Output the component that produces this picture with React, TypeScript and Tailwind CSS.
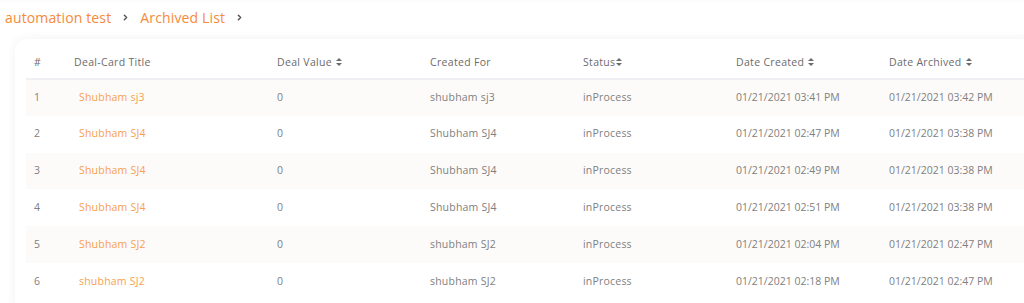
import { ChevronRight } from "lucide-react";

const rows = [
  { n: 1, title: "Shubham sj3", value: "0", forWho: "shubham sj3", status: "inProcess", created: "01/21/2021 03:41 PM", archived: "01/21/2021 03:42 PM" },
  { n: 2, title: "Shubham SJ4", value: "0", forWho: "Shubham SJ4", status: "inProcess", created: "01/21/2021 02:47 PM", archived: "01/21/2021 03:38 PM" },
  { n: 3, title: "Shubham SJ4", value: "0", forWho: "Shubham SJ4", status: "inProcess", created: "01/21/2021 02:49 PM", archived: "01/21/2021 03:38 PM" },
  { n: 4, title: "Shubham SJ4", value: "0", forWho: "Shubham SJ4", status: "inProcess", created: "01/21/2021 02:51 PM", archived: "01/21/2021 03:38 PM" },
  { n: 5, title: "Shubham SJ2", value: "0", forWho: "shubham SJ2", status: "inProcess", created: "01/21/2021 02:04 PM", archived: "01/21/2021 02:47 PM" },
  { n: 6, title: "shubham SJ2", value: "0", forWho: "shubham SJ2", status: "inProcess", created: "01/21/2021 02:18 PM", archived: "01/21/2021 02:47 PM" },
];

function SortIcon({ tight }: { tight?: boolean }) {
  return (
    <svg width="6" height="8" viewBox="0 0 6 8" className={`inline-block -mt-px ${tight ? "ml-px" : "ml-1"}`} fill="currentColor">
      <path d="M3 0 L6 3 L0 3 Z" />
      <path d="M0 5 L6 5 L3 8 Z" />
    </svg>
  );
}

export default function App() {
  return (
    <div className="w-[1024px] h-[303px] overflow-hidden bg-white font-['Open_Sans',sans-serif]">
      <div className="h-[2px] bg-gradient-to-b from-white to-[#fafafa]" />
      {/* Breadcrumb */}
      <div className="flex items-center h-[30px] pl-[5px] text-[14px] font-medium tracking-[0.01em] text-[#f58a3a]">
        <span>automation test</span>
        <ChevronRight size={9} strokeWidth={4} className="mx-[10px] text-[#555]" />
        <span>Archived List</span>
        <ChevronRight size={9} strokeWidth={4} className="ml-[10px] text-[#555]" />
      </div>

      {/* Card */}
      <div className="ml-[15px] mt-[7px] w-[1030px] rounded-xl bg-white shadow-[0_0_12px_rgba(0,0,0,0.06)] pl-[11px] pt-[8px] pb-4">
        <table className="w-[1010px] table-fixed border-collapse text-[10.5px]">
          <colgroup>
            <col className="w-[40px]" />
            <col className="w-[203px]" />
            <col className="w-[153px]" />
            <col className="w-[153px]" />
            <col className="w-[153px]" />
            <col className="w-[153px]" />
            <col className="w-[155px]" />
          </colgroup>
          <thead>
            <tr className="h-[32px] border-b-2 border-[#eef0f4] text-[#6b6b6b] text-left tracking-[0.03em]">
              <th className="font-medium px-2">#</th>
              <th className="font-medium px-2">Deal-Card Title</th>
              <th className="font-medium px-2">Deal Value<SortIcon /></th>
              <th className="font-medium px-2">Created For</th>
              <th className="font-medium px-2">Status<SortIcon tight /></th>
              <th className="font-medium px-2">Date Created<SortIcon /></th>
              <th className="font-medium px-2">Date Archived<SortIcon /></th>
            </tr>
          </thead>
          <tbody>
            {rows.map((r) => (
              <tr key={r.n} className={`h-[36.8px] text-[#808080] ${r.n % 2 === 1 ? "bg-[#fdfbf9]" : "bg-white"}`}>
                <td className="px-2">{r.n}</td>
                <td className="px-2">
                  <span className="pl-[5px] text-[#f7a04f] font-medium tracking-[0.02em]">{r.title}</span>
                </td>
                <td className="px-2">{r.value}</td>
                <td className="px-2 tracking-[0.02em]">{r.forWho}</td>
                <td className="px-2 tracking-[0.02em]">{r.status}</td>
                <td className="px-2">{r.created}</td>
                <td className="px-2">{r.archived}</td>
              </tr>
            ))}
          </tbody>
        </table>
      </div>
    </div>
  );
}
